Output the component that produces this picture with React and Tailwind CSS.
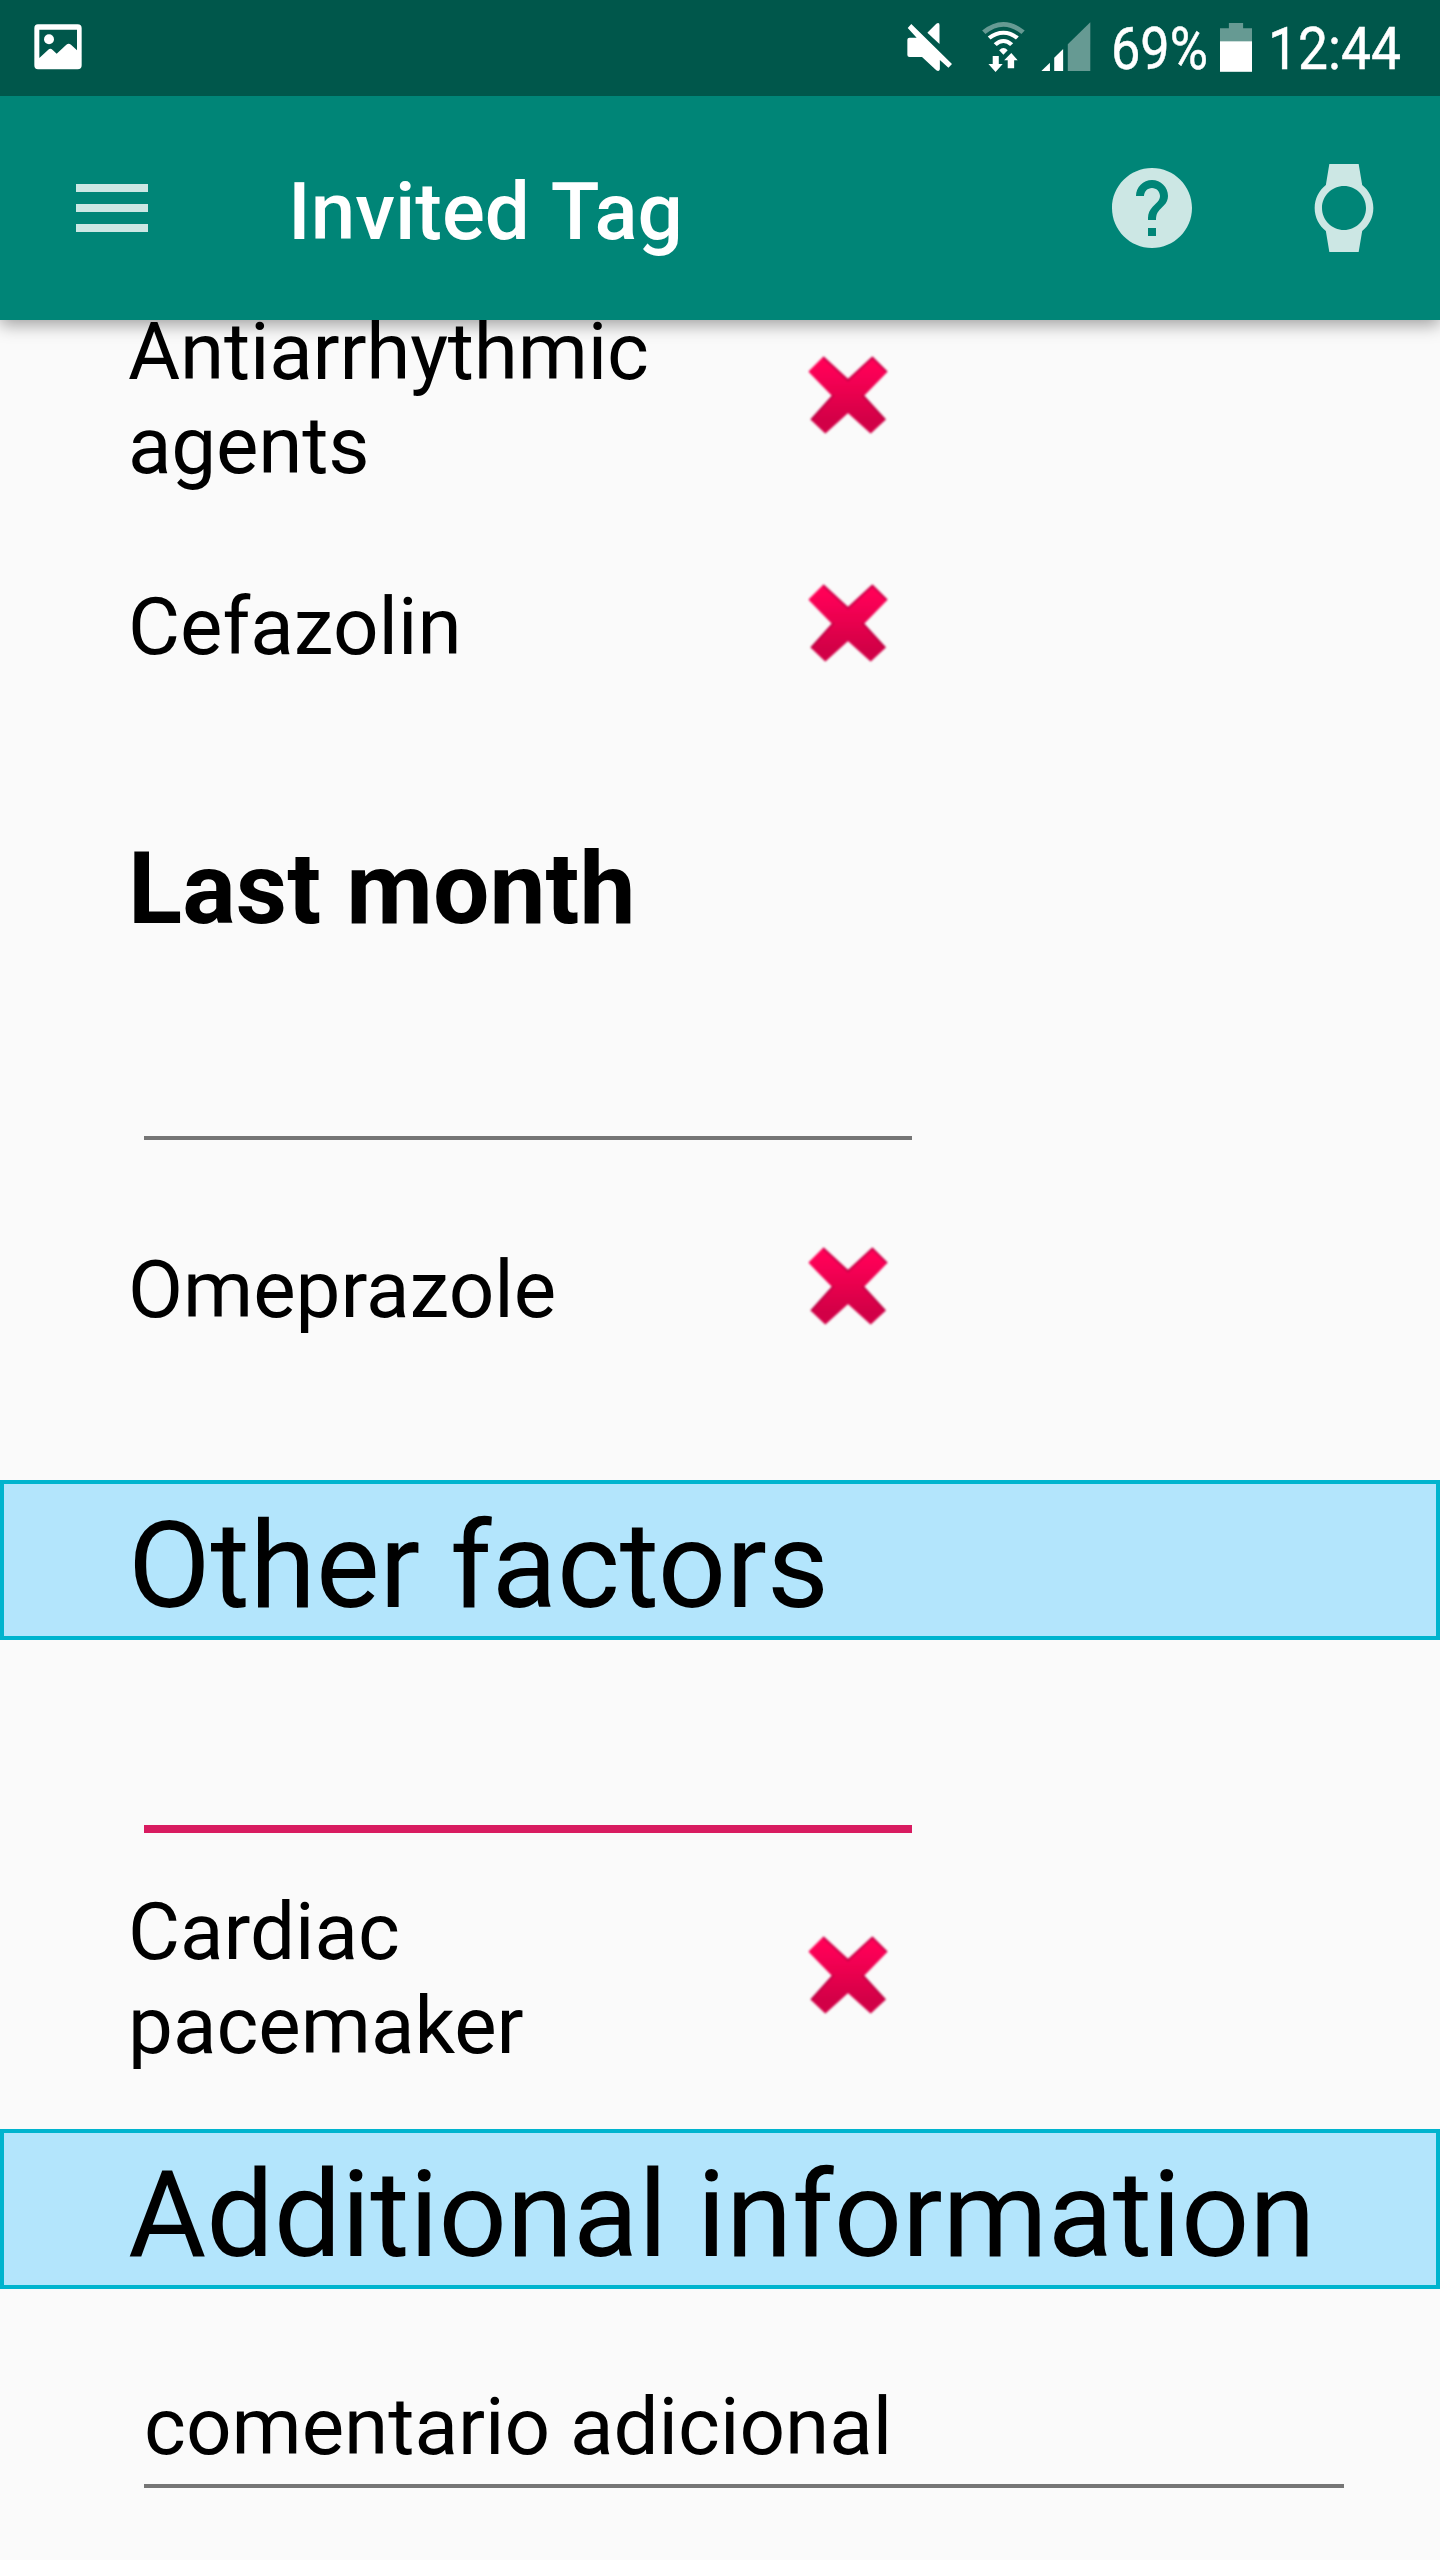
import React from "react";

function ImageIcon() {
  return (
    <svg className="w-[48px] h-[46px]" viewBox="102 71 144 138">
      <path
        fill="#fff"
        fillRule="evenodd"
        d="M114 72h119q12 0 12 12v111q0 12-12 12H114q-11 0-11-12V84q0-12 11-12zM118 88v85l26-24q7-7 14 0l12 11 29-27q7-6 14 0l18 17V88z"
      />
      <circle cx="147" cy="117" r="15" fill="#fff" />
    </svg>
  );
}

function MuteIcon() {
  return (
    <svg className="w-[46px] h-[50px]" viewBox="75 66 128.8 150" preserveAspectRatio="none">
      <g fill="#fff">
        <path d="M132 98L157 71q9-5 9 4v57z" />
        <path d="M87 72L201 192L191 203L167 180V208q-2 8-10 3L117 171H82q-6 0-6-6V119q0-6 6-6H102L77 84z" />
      </g>
    </svg>
  );
}

function WifiIcon() {
  return (
    <svg className="w-[43px] h-[52px]" viewBox="286 63 120.4 156" preserveAspectRatio="none">
      <path d="M291 97Q318 73 346 73T401 97" fill="none" stroke="#669a93" strokeWidth="14" />
      <path d="M306 114Q325 98 346 98T385 114" fill="none" stroke="#fff" strokeWidth="12" />
      <path d="M323 134Q334 123 346 123T369 134" fill="none" stroke="#fff" strokeWidth="12" />
      <path d="M334 151Q346 137 358 151L346 164z" fill="#fff" />
      <path d="M316 168H333V192H344L324 216L304 192H316z" fill="#fff" />
      <path d="M358 205H376V181H386L368 159L348 181H358z" fill="#fff" />
    </svg>
  );
}

function SignalIcon() {
  return (
    <svg className="w-[50px] h-[50px]" viewBox="450 66 140 150" preserveAspectRatio="none">
      <path d="M451 213L475 188V213z" fill="#fff" />
      <path d="M487 213V173L512 147V213z" fill="#fff" />
      <path d="M525 213V133L588 67V213z" fill="#669a93" />
    </svg>
  );
}

function BatteryIcon() {
  return (
    <svg className="w-[32px] h-[49px]" viewBox="952 68 90 147" preserveAspectRatio="none">
      <path d="M977 68h40v16h25v131h-90V84h25z" fill="#669a93" />
      <path d="M952 123h90v91h-90z" fill="#fff" />
    </svg>
  );
}

function HelpIcon() {
  return (
    <svg className="size-24 fill-white/80" viewBox="0 0 24 24">
      <path d="M12 2C6.48 2 2 6.48 2 12s4.48 10 10 10 10-4.48 10-10S17.52 2 12 2zm1 17h-2v-2h2v2zm2.07-7.75l-.9.92C13.45 12.9 13 13.5 13 15h-2v-.5c0-1.1.45-2.1 1.17-2.83l1.24-1.26c.37-.36.59-.86.59-1.41 0-1.1-.9-2-2-2s-2 .9-2 2H8c0-2.21 1.79-4 4-4s4 1.79 4 4c0 .88-.36 1.68-.93 2.25z" />
    </svg>
  );
}

function WatchIcon() {
  return (
    <svg className="size-[88px] fill-white/80" viewBox="0 0 24 24">
      <path d="M20 12c0-2.54-1.19-4.81-3.04-6.27L16 0H8l-.95 5.73C5.19 7.19 4 9.45 4 12s1.19 4.81 3.05 6.27L8 24h8l.96-5.73C18.81 16.81 20 14.54 20 12zM6 12c0-3.31 2.69-6 6-6s6 2.69 6 6-2.69 6-6 6-6-2.69-6-6z" />
    </svg>
  );
}

const CROSS = "M131 83L204 151L277 83L319 125L249 197L314 268L272 307L204 245L136 307L95 268L159 197L89 125z";

function CrossIcon({ id, className }) {
  return (
    <svg className={className} viewBox="81 72 246 246">
      <defs>
        <linearGradient id={`${id}-fill`} x1="0" y1="0" x2="0" y2="1">
          <stop offset="0.12" stopColor="#ff0357" />
          <stop offset="0.85" stopColor="#d20046" />
        </linearGradient>
        <filter id={`${id}-soft`} x="-10%" y="-10%" width="120%" height="120%">
          <feGaussianBlur stdDeviation="3" />
        </filter>
      </defs>
      <g filter={`url(#${id}-soft)`} strokeLinejoin="round" strokeLinecap="round">
        <path d={CROSS} fill={`url(#${id}-fill)`} stroke={`url(#${id}-fill)`} strokeWidth="6" />
        <path
          d="M131 83L204 151L277 83L319 125M249 197L314 268M159 197L95 268"
          fill="none"
          stroke="#a80040"
          strokeOpacity="0.6"
          strokeWidth="6"
        />
      </g>
    </svg>
  );
}

function ItemRow({ id, className, label, iconClass }) {
  return (
    <div className={`flex items-start pl-32 ${className}`}>
      <p className="w-[679px] pr-24 text-[80px] leading-[94px]">{label}</p>
      <CrossIcon id={id} className={`size-[82px] ${iconClass}`} />
    </div>
  );
}

function SectionHeader({ className, children }) {
  return (
    <h2
      className={`h-40 border-4 border-[#00b4ce] bg-[#b3e5fc] pt-3 pl-[124px] text-[120px] leading-[140px] whitespace-nowrap ${className}`}
    >
      {children}
    </h2>
  );
}

export default function App() {
  return (
    <div className="flex h-[2560px] w-[1440px] flex-col overflow-hidden bg-[#fafafa] font-['Roboto',sans-serif] text-black">
      <div className="z-20 flex h-24 shrink-0 items-start bg-[#00574b] pl-[34px] text-[60px] leading-[70px] text-white [-webkit-text-stroke:0.5px_white]">
        <div className="pt-6">
          <ImageIcon />
        </div>
        <div className="ml-[825px] flex">
          <div className="w-[75px] pt-[22px]">
            <MuteIcon />
          </div>
          <div className="w-[59px] pt-[21px]">
            <WifiIcon />
          </div>
          <div className="w-[70px] pt-[22px]">
            <SignalIcon />
          </div>
          <div className="w-[109px] pt-[14px]">
            <span className="block origin-left scale-x-[0.87]">69%</span>
          </div>
          <div className="w-[48px] pt-[23px]">
            <BatteryIcon />
          </div>
          <div className="w-[140px] pt-[14px]">
            <span className="block origin-left scale-x-[0.89]">12:44</span>
          </div>
        </div>
      </div>

      <header className="z-10 flex h-56 shrink-0 items-center bg-[#008577] pl-[76px] shadow-[0_5px_16px_rgba(0,0,0,0.36)]">
        <div className="flex w-[212px] flex-col gap-3">
          <span className="h-2 w-[72px] bg-white/80" />
          <span className="h-2 w-[72px] bg-white/80" />
          <span className="h-2 w-[72px] bg-white/80" />
        </div>
        <h1 className="w-[816px] pt-[7px] text-[80px] leading-[94px] font-medium [word-spacing:3px]">
          <span className="text-white">Invited Tag</span>
        </h1>
        <HelpIcon />
        <div className="ml-[100px]">
          <WatchIcon />
        </div>
      </header>

      <main className="-mt-[15px] flex flex-col">
        <ItemRow
          id="antiarrhythmic"
          label="Antiarrhythmic agents"
          className="h-[188px] tracking-[-0.2px]"
          iconClass="mt-[49px]"
        />
        <ItemRow id="cefazolin" label="Cefazolin" className="mt-[87px] h-[94px]" iconClass="mt-[2px]" />
        <h3 className="mt-[156px] pl-32 text-[100px] leading-[117px] font-bold tracking-[0.1px]">Last month</h3>
        <div className="mt-[189px] ml-36 h-1 w-[768px] bg-[#757575]" />
        <ItemRow id="omeprazole" label="Omeprazole" className="mt-[103px] h-[94px]" iconClass="mt-[2px]" />
        <SectionHeader className="mt-[143px]">Other factors</SectionHeader>
        <div className="mt-[185px] ml-36 h-2 w-[768px] bg-[#d81b60]" />
        <ItemRow id="pacemaker" label="Cardiac pacemaker" className="mt-[52px] h-[188px]" iconClass="mt-[49px]" />
        <SectionHeader className="mt-14 tracking-[-0.12px]">Additional information</SectionHeader>
        <p className="mt-[91px] ml-36 text-[80px] leading-[94px]">comentario adicional</p>
        <div className="mt-[10px] ml-36 h-1 w-[1200px] bg-[#757575]" />
      </main>
    </div>
  );
}
